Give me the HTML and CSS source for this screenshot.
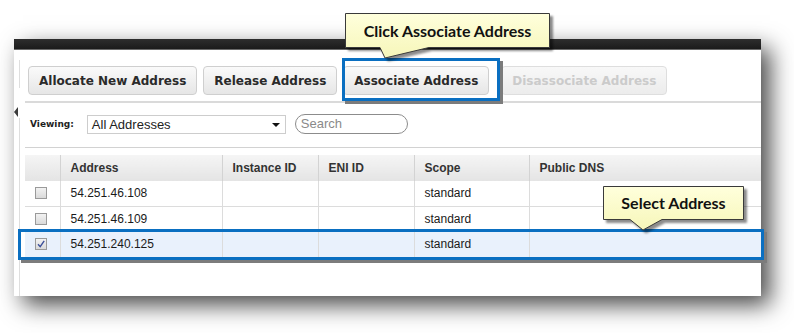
FILE: index.html
```html
<!DOCTYPE html>
<html lang="en">
<head>
	<meta charset="utf-8">
	<title>Elastic IPs - Associate Address</title>
	<link rel="stylesheet" href="styles.css">
</head>

<body>
	<div id="stage">
		<div class="console">
			<div class="topbar"></div>
			<div class="frame">
				<div class="gutter">
					<div class="gutter-line first"></div>
					<span class="collapse"></span>
					<div class="gutter-line rest"></div>
				</div>

				<div class="main">
					<div class="toolbar">
						<button class="btn">Allocate New Address</button>
						<button class="btn">Release Address</button>
						<button class="btn btn-assoc">Associate Address</button>
						<button class="btn" disabled>Disassociate Address</button>
					</div>

					<div class="filter">
						<label class="filter-label">Viewing:</label>
						<div class="select">
							<span>All Addresses</span>
							<span class="caret"></span>
						</div>
						<div class="search">Search</div>
					</div>

					<table class="grid">
						<thead>
							<tr>
								<th class="col-check"></th>
								<th class="col-address">Address</th>
								<th class="col-instance">Instance ID</th>
								<th class="col-eni">ENI ID</th>
								<th class="col-scope">Scope</th>
								<th class="col-dns">Public DNS</th>
							</tr>
						</thead>
						<tbody>
							<tr>
								<td class="col-check"><span class="checkbox"></span></td>
								<td>54.251.46.108</td>
								<td></td>
								<td></td>
								<td>standard</td>
								<td></td>
							</tr>
							<tr>
								<td class="col-check"><span class="checkbox"></span></td>
								<td>54.251.46.109</td>
								<td></td>
								<td></td>
								<td>standard</td>
								<td></td>
							</tr>
							<tr class="selected">
								<td class="col-check">
									<span class="checkbox checked">
										<svg width="10" height="10" viewBox="0 0 10 10"><path d="M2 5.2 L4.2 7.6 L8.2 1.8" fill="none" stroke="#3b4f9a" stroke-width="1.4"/></svg>
									</span>
								</td>
								<td>54.251.240.125</td>
								<td></td>
								<td></td>
								<td>standard</td>
								<td></td>
							</tr>
						</tbody>
					</table>
				</div>
			</div>
		</div>

		<!-- annotation layer -->
		<div class="mark mark-button"></div>
		<div class="mark mark-row"></div>

		<div class="callout callout-button">
			<svg width="212" height="52" viewBox="0 0 212 52">
				<defs>
					<linearGradient id="note1" x1="0" y1="0" x2="0" y2="1">
						<stop offset="0" stop-color="#ffffdc"/>
						<stop offset="1" stop-color="#f6f6b9"/>
					</linearGradient>
				</defs>
				<path d="M0.5 0.5 H204.5 V34.5 H84 L40 45 L35 34.5 H0.5 Z" fill="url(#note1)" stroke="#3a3a3a" stroke-width="1"/>
			</svg>
			<span class="callout-text">Click Associate Address</span>
		</div>

		<div class="callout callout-row">
			<svg width="146" height="48" viewBox="0 0 146 48">
				<defs>
					<linearGradient id="note2" x1="0" y1="0" x2="0" y2="1">
						<stop offset="0" stop-color="#ffffdc"/>
						<stop offset="1" stop-color="#f6f6b9"/>
					</linearGradient>
				</defs>
				<path d="M0.5 0.5 H140.5 V33.5 H59 L40 44 L27 33.5 H0.5 Z" fill="url(#note2)" stroke="#3a3a3a" stroke-width="1"/>
			</svg>
			<span class="callout-text">Select Address</span>
		</div>
	</div>
</body>

</html>
```

FILE: styles.css
```css
html {
	box-sizing: border-box;
}
*,
*::before,
*::after {
	box-sizing: inherit;
}

body {
	background-color: #fff;
	color: #222;
	font-family: "Liberation Sans", Arial, sans-serif;
	font-size: 12px;
	margin: 0;
	padding: 0;
}

#stage {
	height: 333px;
	overflow: hidden;
	padding: 39px 0 0 14px;
	position: relative;
	width: 794px;
}

.console {
	background-color: #fff;
	box-shadow: 9px 9px 22px rgba(0, 0, 0, 0.72);
	display: flex;
	flex-direction: column;
	height: 257px;
	overflow: hidden;
	width: 747px;
}

.topbar {
	background: linear-gradient(#2e2e2e, #1b1b1b);
	border-bottom: 1px solid #6a6a6a;
	flex: none;
	height: 11px;
}

.frame {
	display: flex;
	flex: 1;
	min-height: 0;
}

/* collapsed side panel */
.gutter {
	display: flex;
	flex: none;
	flex-direction: column;
	width: 6px;
}

.gutter-line {
	border-right: 1px solid #dedede;
	width: 6px;
}

.gutter-line.first {
	height: 28px;
	margin-top: 10px;
}

.gutter-line.rest {
	flex: 1;
	margin-top: 1px;
}

.collapse {
	border-bottom: 5px solid transparent;
	border-right: 4px solid #3c3c3c;
	border-top: 5px solid transparent;
	height: 0;
	margin-top: 19px;
	width: 0;
}

.main {
	flex: 1;
	margin-left: 5px;
	min-width: 0;
}

.toolbar {
	border-bottom: 2px solid #dadada;
	display: flex;
	gap: 6px;
	height: 53px;
	padding: 16px 0 0 3px;
}

.btn {
	background: linear-gradient(#fafafa, #e6e6e6);
	border: 1px solid #cfcfcf;
	border-radius: 4px;
	color: #2a2a2a;
	font-family: "DejaVu Sans", Verdana, sans-serif;
	font-size: 12px;
	font-weight: bold;
	height: 29px;
	margin: 0;
	padding: 0 10px;
}

.btn-assoc {
	margin-right: 6px;
}

.btn[disabled] {
	background: linear-gradient(#f8f8f8, #ececec);
	border-color: #dedede;
	color: #cbcbcb;
}

.filter {
	align-items: center;
	border-bottom: 1px solid #d2d2d2;
	display: flex;
	height: 45px;
	padding: 0 0 2px 5px;
}

.filter-label {
	color: #1e1e1e;
	font-family: "DejaVu Sans", Verdana, sans-serif;
	font-size: 9px;
	font-weight: bold;
	margin-right: 13px;
}

.select {
	align-items: center;
	border: 1px solid #cdcdcd;
	display: flex;
	font-size: 13px;
	height: 19px;
	justify-content: space-between;
	padding: 0 5px 0 4px;
	width: 199px;
}

.caret {
	border-left: 4px solid transparent;
	border-right: 4px solid transparent;
	border-top: 4px solid #111;
	height: 0;
	margin-top: 2px;
	width: 0;
}

.search {
	border: 1px solid #8c8c8c;
	border-radius: 10px;
	color: #8a8a8a;
	font-size: 13px;
	height: 20px;
	line-height: 18px;
	margin-left: 9px;
	padding-left: 5px;
	width: 113px;
}

.grid {
	border-collapse: collapse;
	margin-top: 7px;
	table-layout: fixed;
	width: 736px;
}

.grid th {
	background: linear-gradient(#f5f5f5, #e4e4e4);
	border-left: 1px solid #d3d3d3;
	color: #333;
	font-size: 12px;
	height: 26px;
	padding: 0 0 0 10px;
	text-align: left;
}

.grid th:first-child,
.grid td:first-child {
	border-left: none;
}

.grid td {
	border-bottom: 1px solid #dcdcdc;
	border-left: 1px solid #dcdcdc;
	color: #1a1a1a;
	height: 25px;
	padding: 0 0 0 10px;
}

.grid tr.selected td {
	background-color: #e9f1fc;
	height: 26px;
}

.col-check { width: 35px; }
.col-address { width: 162px; }
.col-instance { width: 96px; }
.col-eni { width: 96px; }
.col-scope { width: 115px; }
.col-dns { width: 232px; }

.checkbox {
	background: linear-gradient(#f2f2f2, #dadada);
	border: 1px solid #9a9a9a;
	display: block;
	height: 12px;
	width: 12px;
}

.checkbox svg {
	display: block;
}

/* blue highlight frames */
.mark {
	border: 3px solid #0a6fc1;
	box-shadow: 3px 3px 0 #7c7c7c;
	position: absolute;
}

.mark-button {
	height: 43px;
	left: 342px;
	top: 58px;
	width: 158px;
}

.mark-row {
	height: 31px;
	left: 18px;
	top: 229px;
	width: 746px;
}

/* yellow notes */
.callout {
	position: absolute;
}

.callout svg {
	display: block;
	filter: drop-shadow(3px 3px 1px rgba(0, 0, 0, 0.45));
}

.callout-text {
	color: #111;
	font-family: Lato, "Open Sans", sans-serif;
	font-size: 16px;
	font-weight: bold;
	left: 0;
	position: absolute;
	text-align: center;
	top: 0;
}

.callout-button {
	left: 345px;
	top: 13px;
}

.callout-button .callout-text {
	line-height: 35px;
	width: 205px;
}

.callout-row {
	left: 603px;
	top: 186px;
}

.callout-row .callout-text {
	line-height: 34px;
	width: 141px;
}
```
